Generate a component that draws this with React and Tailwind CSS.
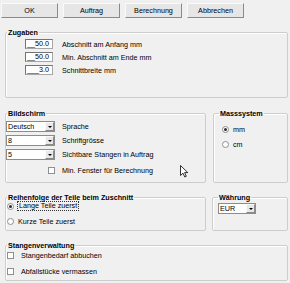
import React from 'react';

const Btn = ({ children }) => (
  <button
    type="button"
    className="h-[15px] w-[57px] border border-t-[#fafafa] border-l-[#fafafa] border-r-[#8a8a8a] border-b-[#8a8a8a] bg-[#e6e6e6] text-[7.2px] leading-[13px] text-black"
  >
    {children}
  </button>
);

const Group = ({ title, className = '', legendClass = 'ml-[1px]', children }) => (
  <fieldset
    className={`rounded-[2px] border border-[#cdcdcd] shadow-[inset_1px_1px_0_#ffffff] ${className}`}
  >
    <legend className={`px-[1px] text-[7.2px] font-bold leading-[9px] text-black ${legendClass}`}>
      {title}
    </legend>
    {children}
  </fieldset>
);

const MaskInput = ({ value }) => (
  <div className="flex h-[10px] w-[28px] items-center justify-end border border-[#a6a6a6] border-t-[#747474] border-l-[#747474] bg-white pr-[3px] text-[7.2px] leading-[8px]">
    {value}
  </div>
);

const Select = ({ value, width = 'w-[49px]' }) => (
  <div className={`flex h-[11px] items-stretch border border-[#8c8c8c] bg-white ${width}`}>
    <span className="flex-1 pl-[1px] text-[7.2px] leading-[9px]">{value}</span>
    <span className="flex w-[9px] items-center justify-center border border-t-[#fafafa] border-l-[#fafafa] border-r-[#8a8a8a] border-b-[#8a8a8a] bg-[#e8e8e8]">
      <span className="h-0 w-0 border-x-[2px] border-t-[2px] border-x-transparent border-t-black" />
    </span>
  </div>
);

const Check = () => <span className="block h-[7px] w-[7px] shrink-0 border border-[#8e8f8f] bg-white" />;

const Radio = ({ checked }) => (
  <span className="flex h-[7px] w-[7px] shrink-0 items-center justify-center rounded-full border border-[#8e8f8f] bg-white">
    {checked && <span className="h-[3px] w-[3px] rounded-full bg-[#2b2b2b]" />}
  </span>
);

export default function App() {
  return (
    <div className="relative h-[283px] w-[290px] overflow-hidden bg-[#f0f0f0] pl-[5px] pr-[2px] font-['Liberation_Sans',Arial,sans-serif] text-[7.2px] text-black">
      <div className="-ml-[4px] flex gap-[5px] pt-[3px]">
        <Btn>OK</Btn>
        <Btn>Auftrag</Btn>
        <Btn>Berechnung</Btn>
        <Btn>Abbrechen</Btn>
      </div>

      <Group title="Zugaben" className="mt-[10px] h-[70px]">
        <div className="mt-[2px] flex flex-col gap-[3px] pl-[19px]">
          {[
            ['__50.0', 'Abschnitt am Anfang mm'],
            ['__50.0', 'Min. Abschnitt am Ende mm'],
            ['___3.0', 'Schnittbreite mm'],
          ].map(([v, l]) => (
            <div key={l} className="flex h-[10px] items-center gap-[9px]">
              <MaskInput value={v} />
              <span className="leading-[9px]">{l}</span>
            </div>
          ))}
        </div>
      </Group>

      <div className="mt-[11px] flex gap-[7px]">
        <Group title="Bildschirm" className="h-[74px] w-[201px]">
          <div className="mt-[3px] flex flex-col gap-[3px]">
            {[
              ['Deutsch', 'Sprache'],
              ['8', 'Schriftgrösse'],
              ['5', 'Sichtbare Stangen in Auftrag'],
            ].map(([v, l]) => (
              <div key={l} className="flex h-[11px] items-center gap-[7px]">
                <Select value={v} />
                <span className="leading-[9px]">{l}</span>
              </div>
            ))}
          </div>
          <div className="mt-[6px] flex h-[8px] items-center gap-[7px] pl-[42px]">
            <Check />
            <span className="leading-[9px]">Min. Fenster für Berechnung</span>
          </div>
        </Group>
        <Group title="Masssystem" className="h-[74px] w-[75px]" legendClass="ml-[5px]">
          <div className="mt-[7px] flex flex-col gap-[6px] pl-[8px]">
            <div className="flex h-[9px] items-center gap-[4px]">
              <Radio checked />
              <span className="leading-[9px]">mm</span>
            </div>
            <div className="flex h-[9px] items-center gap-[4px]">
              <Radio />
              <span className="leading-[9px]">cm</span>
            </div>
          </div>
        </Group>
      </div>

      <div className="mt-[10px] flex gap-[6px]">
        <Group title="Reihenfolge der Teile beim Zuschnitt" className="h-[38px] w-[201px]">
          <div className="-mt-[1px] flex flex-col gap-[6px] pl-[1px]">
            <div className="flex h-[10px] items-center gap-[3px]">
              <Radio checked />
              <span className="border border-dotted border-[#333] px-[1px] leading-[8px]">Lange Teile zuerst</span>
            </div>
            <div className="flex h-[9px] items-center gap-[4px]">
              <Radio />
              <span className="leading-[9px]">Kurze Teile zuerst</span>
            </div>
          </div>
        </Group>
        <Group title="Währung" className="h-[38px] w-[76px]" legendClass="ml-[5px]">
          <div className="mt-[1px] pl-[5px]">
            <Select value="EUR" width="w-[38px]" />
          </div>
        </Group>
      </div>

      <Group title="Stangenverwaltung" className="mt-[10px] h-[40px]">
        <div className="mt-[1px] flex flex-col gap-[8px] pl-[1px]">
          <div className="flex h-[8px] items-center gap-[7px]">
            <Check />
            <span className="leading-[9px]">Stangenbedarf abbuchen</span>
          </div>
          <div className="flex h-[8px] items-center gap-[7px]">
            <Check />
            <span className="leading-[9px]">Abfallstücke vermassen</span>
          </div>
        </div>
      </Group>

      <svg className="absolute left-[180px] top-[165px]" width="9" height="13" viewBox="0 0 9 13">
        <path d="M0.5 0.5 L0.5 10.5 L3 8.2 L4.8 12 L6.3 11.3 L4.6 7.6 L7.8 7.6 Z" fill="#fff" stroke="#000" strokeWidth="0.8" strokeLinejoin="round" />
      </svg>
    </div>
  );
}
